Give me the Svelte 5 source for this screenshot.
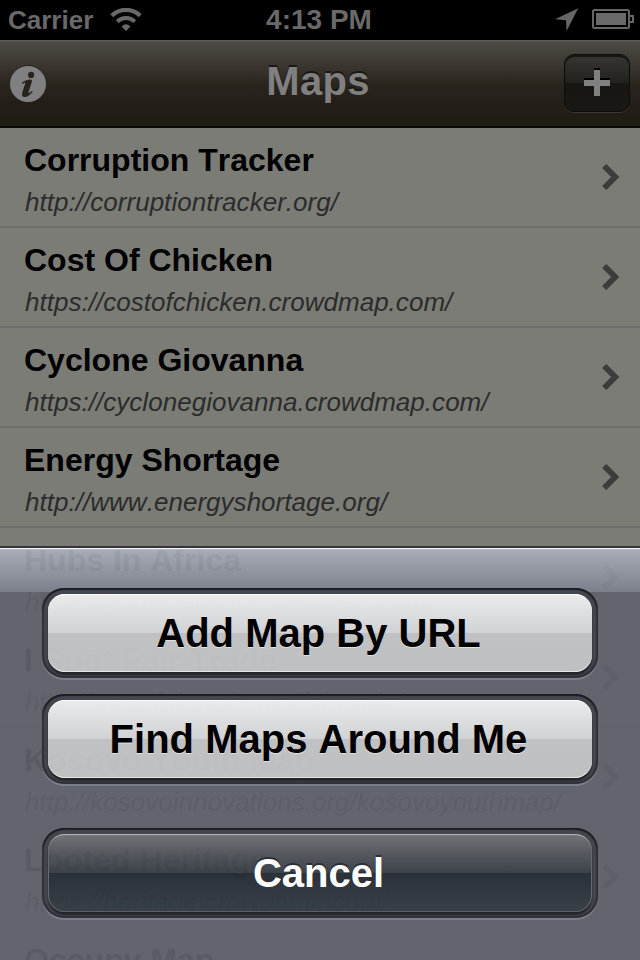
<script>
  const maps = [
    { name: 'Corruption Tracker', url: 'http://corruptiontracker.org/' },
    { name: 'Cost Of Chicken', url: 'https://costofchicken.crowdmap.com/' },
    { name: 'Cyclone Giovanna', url: 'https://cyclonegiovanna.crowdmap.com/' },
    { name: 'Energy Shortage', url: 'http://www.energyshortage.org/' },
    { name: 'Hubs In Africa', url: 'https://hubsinafrica.crowdmap.com/' },
    { name: 'I Spot Fair Trade', url: 'http://www.fairtrade.net/fairtrade/' },
    { name: 'Kosovo Youth Map', url: 'http://kosovoinnovations.org/kosovoyouthmap/' },
    { name: 'Looted Heritage', url: 'https://heritage.crowdmap.com/' },
    { name: 'Occupy Map', url: 'https://occupymap.crowdmap.com/' }
  ];
  const actions = ['Add Map By URL', 'Find Maps Around Me'];
</script>

<div class="screen">
  <header class="status">
    <div class="side">
      <span class="carrier">Carrier</span>
      <svg class="wifi" width="32" height="24" viewBox="0 0 32 24">
        <path d="M1.8 7.7A20.3 20.3 0 0 1 30.2 7.7" fill="none" stroke="#696969" stroke-width="4.2" />
        <path d="M7.3 13.6A12.5 12.5 0 0 1 24.7 13.6" fill="none" stroke="#696969" stroke-width="4" />
        <path d="M11.6 18.4Q16 14 20.4 18.4L16 23Z" fill="#696969" />
      </svg>
    </div>
    <span class="time">4:13 PM</span>
    <div class="side end">
      <svg width="24" height="24" viewBox="0 0 24 24"><path d="M23.2 0.2L11.6 23L11 12.2L0 11.2Z" fill="#666" /></svg>
      <svg class="battery" width="43" height="22" viewBox="0 0 43 22">
        <rect x="1" y="1" width="36" height="18" rx="1.5" fill="none" stroke="#666" stroke-width="2" />
        <rect x="4" y="4" width="30" height="12" fill="#696969" />
        <path d="M38 7H41V13H38" fill="none" stroke="#666" stroke-width="2" />
      </svg>
    </div>
  </header>

  <nav>
    <svg class="info" width="38" height="40" viewBox="0 0 38 40">
      <circle cx="18" cy="18" r="18" fill="#28251f" />
      <circle cx="18" cy="19" r="18" fill="#808080" />
      <circle cx="21.1" cy="9.9" r="3.1" fill="#28231c" />
      <path d="M11.8 18.2C14.8 14.9 18.3 14.8 20 14.5Q22.6 14.2 21.8 17L18.5 27.2Q17.8 29.5 22 26L22.8 26.8C19.5 31 16.2 32.4 13.8 31.9C11.4 31.4 12 28.5 12.6 26.5L15.3 18.2Q15.8 16.4 12.5 19Z" fill="#28231c" />
    </svg>
    <h1>Maps</h1>
    <button class="add" aria-label="Add map">
      <svg width="28" height="30" viewBox="0 0 28 30">
        <path d="M11 0H17V10H27V16H17V26H11V16H1V10H11Z" fill="#000" />
        <path d="M11 2H17V12H27V18H17V28H11V18H1V12H11Z" fill="#808080" />
      </svg>
    </button>
  </nav>

  <ul>
    {#each maps as map}
      <li>
        <div class="labels">
          <strong>{map.name}</strong>
          <em>{map.url}</em>
        </div>
        <svg width="18" height="26" viewBox="0 0 18 26">
          <path d="M2.2 2L13.2 13L2.2 24" fill="none" stroke="#3c3c3c" stroke-width="5.8" />
        </svg>
      </li>
    {/each}
  </ul>

  <section class="sheet">
    {#each actions as action}
      <div class="well"><button class="light">{action}</button></div>
    {/each}
    <div class="well last"><button class="dark">Cancel</button></div>
  </section>
</div>

<style>
  :global(body) {
    margin: 0;
  }
  .screen {
    position: relative;
    width: 640px;
    height: 960px;
    overflow: hidden;
    background: #7b7c76;
    font-family: 'Liberation Sans', Arial, Helvetica, sans-serif;
    font-kerning: none;
  }
  svg {
    display: block;
    flex: none;
  }
  button {
    display: block;
    padding: 0;
    border: 0;
    box-sizing: border-box;
    font: inherit;
  }
  .status {
    display: flex;
    height: 40px;
    background: #000;
    color: #696969;
    font-weight: bold;
  }
  .side {
    display: flex;
    flex: 1;
    align-items: flex-start;
    padding: 8px 5px 0 8px;
  }
  .end {
    justify-content: flex-end;
  }
  .carrier {
    font-size: 26px;
    line-height: 24px;
  }
  .wifi {
    margin-left: 17px;
  }
  .battery {
    margin: 1px 0 0 13px;
  }
  .time {
    margin: 0 1px 0 -1px;
    font-size: 28px;
    line-height: 39px;
  }
  nav {
    display: flex;
    align-items: flex-start;
    justify-content: space-between;
    box-sizing: border-box;
    height: 88px;
    padding: 14px 10px 0;
    border-bottom: 2px solid #0c0a07;
    background: linear-gradient(#65625b 0, #4d4a45 2px, #3a362f 26px, #2a251d 44px, #241e18 64px, #201d15 84px);
  }
  .info {
    margin: 11px 24px 0 0;
  }
  h1 {
    margin: 0;
    color: #808080;
    font-size: 40px;
    line-height: 55px;
    letter-spacing: 0.3px;
    text-shadow: 0 -2px 0 #1a1814;
  }
  .add {
    display: flex;
    justify-content: center;
    width: 66px;
    height: 58px;
    padding-top: 13px;
    border: 1px solid #0e0d0b;
    border-radius: 10px;
    background: linear-gradient(#383632, #23211d 50%, #181612 51%, #1a1813);
    box-shadow: 0 1px 0 0 #3b3832, inset 0 2px 1px #171512;
  }
  ul {
    margin: 0;
    padding: 0;
    list-style: none;
  }
  li {
    display: flex;
    justify-content: space-between;
    box-sizing: border-box;
    height: 100px;
    padding: 14px 20px 0 24px;
    border-bottom: 2px solid #6e6e6f;
  }
  li svg {
    margin-top: 22px;
  }
  .labels {
    display: flex;
    flex-direction: column;
    white-space: nowrap;
  }
  strong {
    font-size: 32px;
    line-height: 36px;
    color: #000;
  }
  em {
    margin: 9px 0 0 1px;
    font-size: 26px;
    line-height: 30px;
    letter-spacing: 0.03px;
    color: #2c2c2c;
  }
  .sheet {
    position: absolute;
    inset: 546px 0 0;
    box-sizing: border-box;
    padding: 42px 42px 0;
    background: linear-gradient(
      #31363d 0 2px,
      #f0f2f4 2px 3px,
      #b8bdc4 3px 4px,
      rgba(170, 175, 185, 0.93) 4px,
      rgba(123, 128, 140, 0.93) 46px,
      rgba(96, 99, 109, 0.92) 46px
    );
  }
  .well {
    box-sizing: border-box;
    height: 90px;
    margin-bottom: 16px;
    padding: 6px;
    border-radius: 22px;
    box-shadow:
      0 2px 0 #7b7f89,
      inset 0 2px 1px #1c1d21,
      inset 0 0 1px 3px #303238;
  }
  .last {
    margin-top: 44px;
  }
  .well button {
    width: 100%;
    height: 78px;
    padding-right: 3px;
    border-radius: 17px;
    font-size: 40px;
    font-weight: bold;
    line-height: 78px;
    text-align: center;
  }
  .light {
    background: linear-gradient(
      rgba(255, 255, 255, 0.87),
      rgba(237, 237, 238, 0.8) 50%,
      rgba(216, 216, 216, 0.8) 50%,
      rgba(215, 215, 215, 0.8)
    );
    box-shadow:
      inset 0 1px 0 #fafafa,
      inset 0 -1px 0 #e6e6e8,
      0 3px 2px #242529,
      0 0 1px 4px #44464f;
    color: #000;
    text-shadow: 0 1px 0 #e0e0e0;
  }
  .dark {
    background: linear-gradient(
      rgba(122, 127, 125, 0.6),
      rgba(82, 87, 90, 0.6) 22%,
      rgba(36, 43, 50, 0.6) 50%,
      rgba(5, 14, 20, 0.6) 50%,
      rgba(30, 41, 47, 0.6)
    );
    box-shadow:
      inset 0 2px 1px -1px #b5b8bc,
      inset 1px 0 0 #666a70,
      inset -1px 0 0 #666a70,
      inset 0 -1px 0 #5c6066,
      0 3px 2px #242529,
      0 0 1px 4px #44464f;
    color: #fff;
    text-shadow: 0 -2px 0 #2b2e34;
  }
</style>
